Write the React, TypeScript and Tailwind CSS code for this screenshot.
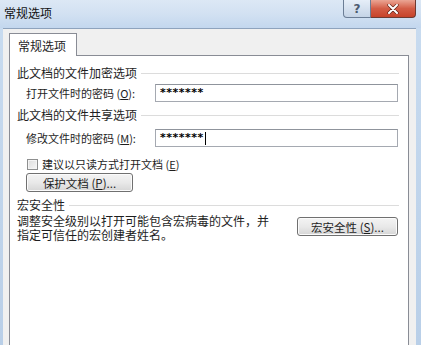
import { Fragment } from 'react';

const font = { fontFamily: '"Microsoft YaHei", "Noto Sans CJK SC", "Noto Sans", sans-serif' };

function GroupHeader({ title }: { title: string }) {
  return (
    <div className="flex items-center h-[14px] pl-[7px] pr-[9px]">
      <span className="text-[12px] leading-[14px] text-[#1e1e1e] whitespace-nowrap">{title}</span>
      <div className="flex-1 h-px bg-[#dcdcdc] ml-[4px]" />
    </div>
  );
}

function PasswordRow({ label, hotkey, value, caret }: { label: string; hotkey: string; value: string; caret?: boolean }) {
  return (
    <div className="flex items-center h-[18px] pl-[16px] pr-[10px]">
      <span className="w-[129px] text-[11px] leading-[14px] text-[#1e1e1e] whitespace-nowrap">
        {label} (<span className="underline">{hotkey}</span>):
      </span>
      <div className="flex-1 h-[18px] flex items-center border border-[#a5a9b1] border-t-[#8f949c] bg-white pl-[4px]">
        <span className="text-[11px] leading-[12px] font-bold text-black tracking-[0.5px]" style={{ fontFamily: '"DejaVu Sans", sans-serif' }}>
          {value}
        </span>
        {caret && <span className="w-px h-[13px] bg-black ml-[1px]" />}
      </div>
    </div>
  );
}

function WinButton({ children, className }: { children: React.ReactNode; className?: string }) {
  return (
    <div
      className={`flex items-center justify-center h-[19px] rounded-[3px] border border-[#707070] bg-gradient-to-b from-[#f4f4f4] via-[#e9e9e9] to-[#d6d6d6] shadow-[inset_0_0_0_1px_#fbfbfb] text-[11.5px] leading-[14px] text-[#1e1e1e] ${className ?? ''}`}
    >
      {children}
    </div>
  );
}

export default function App() {
  return (
    <div className="w-[421px] h-[345px] overflow-hidden bg-gradient-to-b from-[#c9dcf0] to-[#b9cfe8]" style={font}>
      {/* Title bar */}
      <div className="flex items-start h-[28px] bg-gradient-to-b from-[#dce8f5] via-[#d2e1f2] to-[#c3d7ee]">
        <span className="ml-[4px] mt-[6px] text-[12px] leading-[14px] text-[#111]">常规选项</span>
        <div className="ml-auto mr-[5px] flex">
          <div className="w-[28px] h-[18px] flex items-center justify-center rounded-bl-[4px] border border-t-0 border-[#6b7d95] bg-gradient-to-b from-[#e6eef8] to-[#c5d4e6] text-[12px] leading-[12px] font-bold text-[#4b5a6f]" style={{ fontFamily: '"DejaVu Sans", sans-serif' }}>
            ?
          </div>
          <div className="w-[45px] h-[18px] flex items-center justify-center rounded-br-[4px] border border-l-0 border-t-0 border-[#6e3a31] bg-gradient-to-b from-[#eaa594] via-[#d35d46] to-[#c7432a]">
            <svg width="12" height="10" viewBox="0 0 12 10">
              <path d="M2 1 L10 9 M10 1 L2 9" stroke="#5a1d12" strokeWidth="3.2" strokeLinecap="round" />
              <path d="M2 1 L10 9 M10 1 L2 9" stroke="#ffffff" strokeWidth="2" strokeLinecap="round" />
            </svg>
          </div>
        </div>
      </div>

      {/* Client area */}
      <div className="ml-[3px] mr-[5px] h-[317px] bg-[#f0f0f0] border-t border-[#8ea3bd] pl-[6px] pt-[4px] pr-[1px]">
        {/* Tab strip */}
        <div className="flex h-[22px]">
          <div className="relative z-10 w-[68px] h-[23px] bg-white border border-b-0 border-[#898c95] flex items-start pl-[8px] pt-[5px]">
            <span className="text-[12px] leading-[14px] text-[#1e1e1e]">常规选项</span>
          </div>
        </div>
        {/* Tab panel */}
        <div className="w-[400px] h-[300px] bg-white border border-[#898c95]">
          <div className="mt-[10px]">
            <GroupHeader title="此文档的文件加密选项" />
          </div>
          <div className="mt-[4px]">
            <PasswordRow label="打开文件时的密码" hotkey="O" value="*******" />
          </div>
          <div className="mt-[6px]">
            <GroupHeader title="此文档的文件共享选项" />
          </div>
          <div className="mt-[7px]">
            <PasswordRow label="修改文件时的密码" hotkey="M" value="*******" caret />
          </div>
          <div className="mt-[10px] flex items-center h-[14px] pl-[17px]">
            <div className="w-[11px] h-[11px] border border-[#8e8f8f] bg-gradient-to-br from-[#dcdcdc] to-[#f6f6f6] shadow-[inset_0_0_0_1px_#f4f4f4]" />
            <span className="ml-[4px] text-[11px] leading-[14px] text-[#1e1e1e]">
              建议以只读方式打开文档 (<span className="underline">E</span>)
            </span>
          </div>
          <div className="mt-[2px] pl-[16px]">
            <WinButton className="w-[107px]">
              <Fragment>
                保护文档 (<span className="underline">P</span>)...
              </Fragment>
            </WinButton>
          </div>
          <div className="mt-[6px]">
            <GroupHeader title="宏安全性" />
          </div>
          <div className="mt-[2px] flex items-start pl-[7px] pr-[10px]">
            <p className="flex-1 text-[12px] leading-[14px] text-[#1e1e1e]">
              调整安全级别以打开可能包含宏病毒的文件，并
              <br />
              指定可信任的宏创建者姓名。
            </p>
            <WinButton className="w-[101px] mt-[3px]">
              <Fragment>
                宏安全性 (<span className="underline">S</span>)...
              </Fragment>
            </WinButton>
          </div>
        </div>
      </div>
    </div>
  );
}
